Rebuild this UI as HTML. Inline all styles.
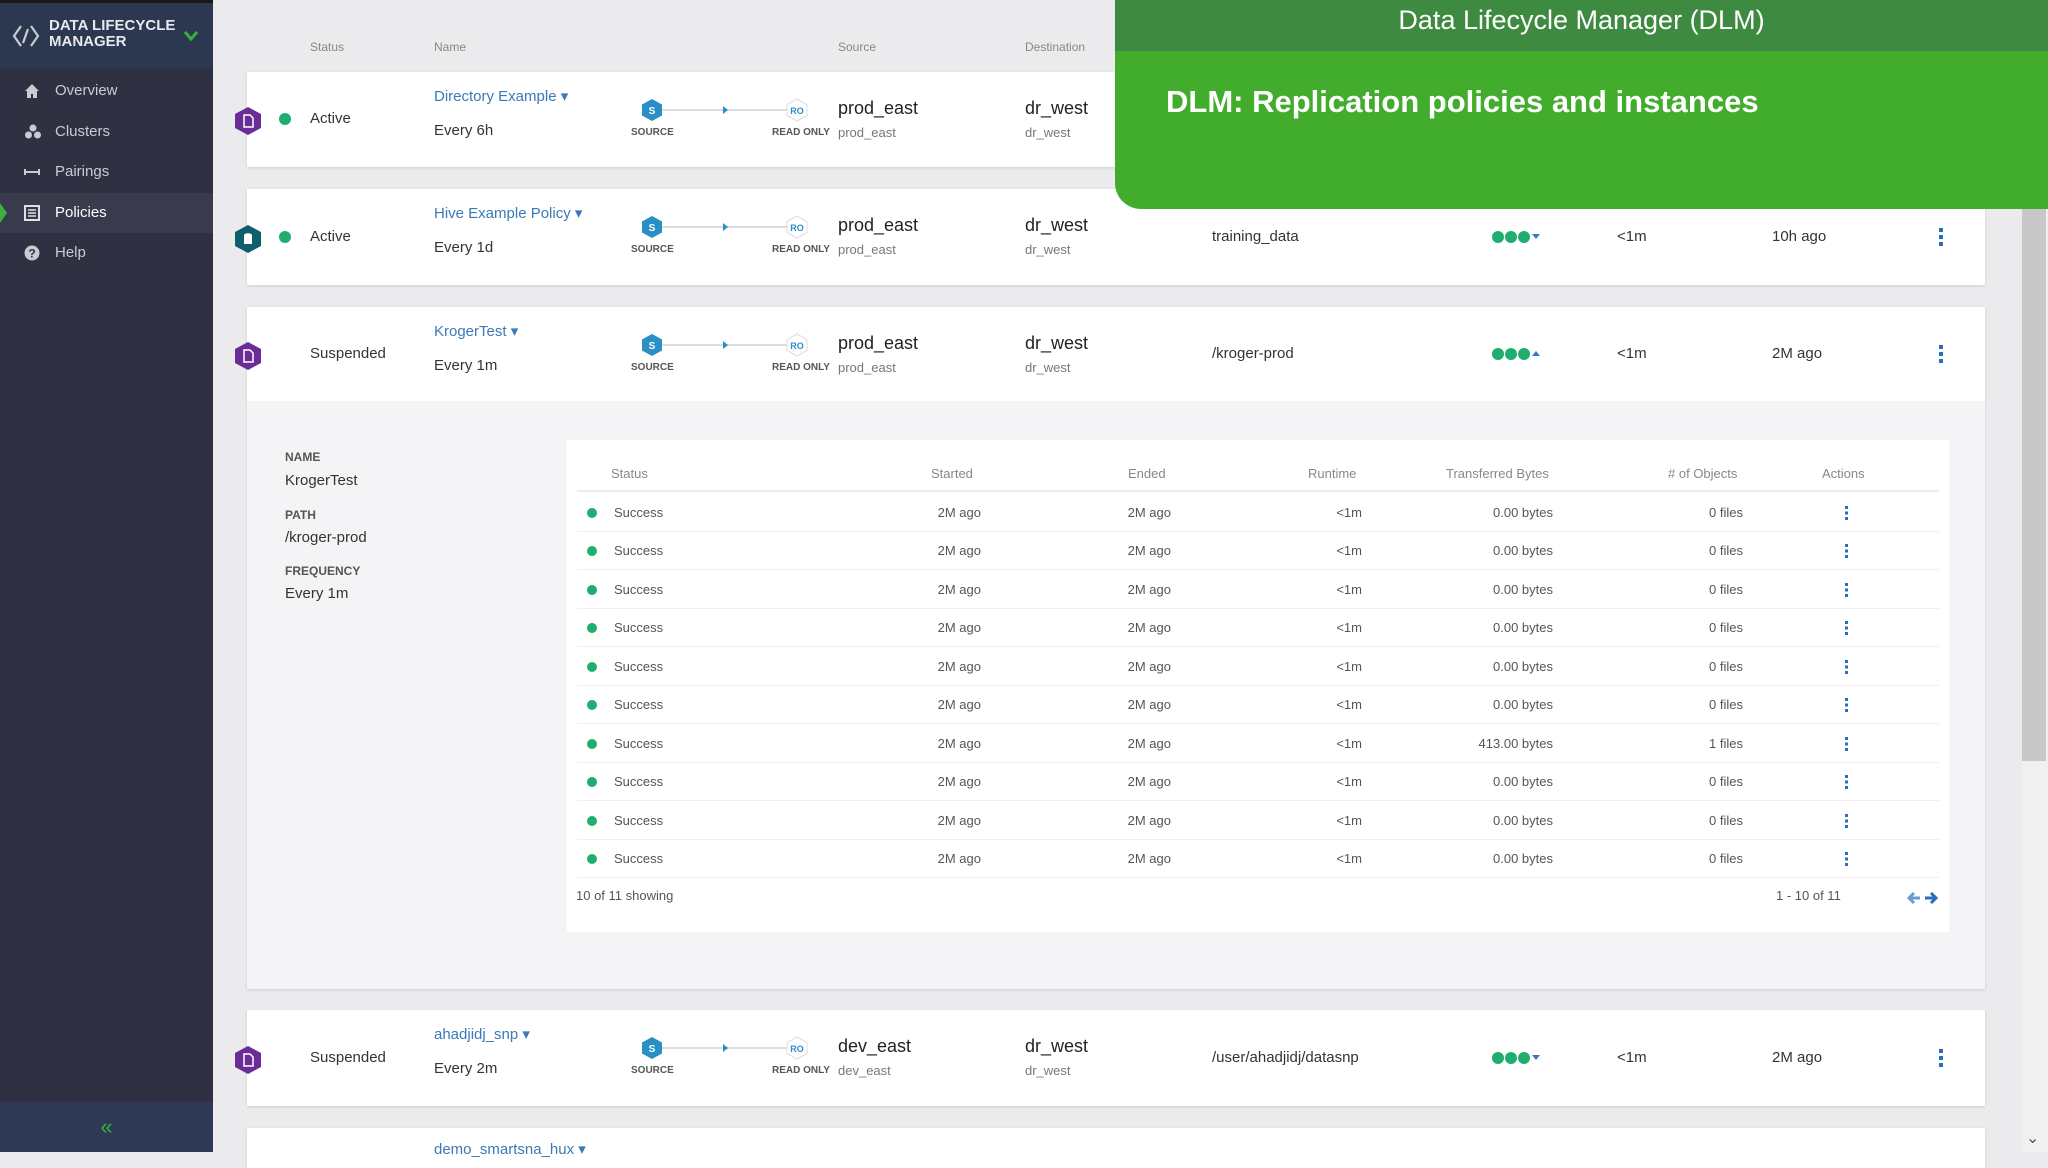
<!DOCTYPE html>
<html><head><meta charset="utf-8"><style>
*{margin:0;padding:0;box-sizing:border-box}
body{width:2048px;height:1152px;overflow:hidden;background:#ebebed;font-family:"Liberation Sans",sans-serif;position:relative;color:#333}
.a{position:absolute;white-space:nowrap}
#side{position:absolute;left:0;top:0;width:213px;height:1152px;background:#2f3142}
#sidehead{position:absolute;left:0;top:0;width:213px;height:68px;background:#2c3850;border-top:3px solid #1a1a1a}
.nav{position:absolute;left:0;width:213px;height:40px;color:#c9cbd3;font-size:15px;line-height:40px;padding-left:55px}
.nav svg{position:absolute;left:24px;top:12px}
#coll{position:absolute;left:0;top:1102px;width:213px;height:50px;background:#2e3a55;color:#3bb03b;font-size:22px;text-align:center;line-height:50px}
.card{position:absolute;left:247px;width:1738px;background:#fff;box-shadow:0 1px 3px rgba(0,0,0,.12)}
.card .a{line-height:24px;transform:translateY(-12px)}
.st{font-size:15px;color:#333}
.nm{font-size:15px;color:#3b79b8}
.fr{font-size:15px;color:#333}
.lbl{font-size:10px;font-weight:bold;color:#555}
.big{font-size:18px;color:#222}
.sub{font-size:13px;color:#777}
.hdr{font-size:12px;color:#888}
.tc{font-size:13px;color:#555}
.dot{width:12px;height:12px;border-radius:6px;background:#1fae6e}
</style></head><body>

<div class="a hdr" style="left:310px;top:40px">Status</div>
<div class="a hdr" style="left:434px;top:40px">Name</div>
<div class="a hdr" style="left:838px;top:40px">Source</div>
<div class="a hdr" style="left:1025px;top:40px">Destination</div>

<div id="side">
 <div id="sidehead">
  <svg class="a" style="left:12px;top:20px" width="28" height="26" viewBox="0 0 28 26"><path d="M9 3L2 13l7 10M19 3l7 10-7 10M16 6l-5 14" stroke="#c9cbd3" stroke-width="2.2" fill="none"/></svg>
  <div class="a" style="left:49px;top:15px;color:#e8e9ee;font-size:15px;font-weight:bold;line-height:16px">DATA LIFECYCLE<br>MANAGER</div>
  <svg class="a" style="left:184px;top:27px" width="14" height="11" viewBox="0 0 14 11"><path d="M1 2l6 7 6-7" stroke="#3bb03b" stroke-width="3" fill="none"/></svg>
 </div>
 <div class="nav" style="top:71px"><svg width="16" height="16" viewBox="0 0 16 16"><path d="M8 1L1 8h2v7h4v-4h2v4h4V8h2z" fill="#c9cbd3"/></svg>Overview</div>
 <div class="nav" style="top:112px"><svg width="18" height="16" viewBox="0 0 18 16"><circle cx="9" cy="4" r="3.5" fill="#c9cbd3"/><circle cx="4.5" cy="11" r="3.5" fill="#c9cbd3"/><circle cx="13.5" cy="11" r="3.5" fill="#c9cbd3"/></svg>Clusters</div>
 <div class="nav" style="top:152px"><svg width="16" height="16" viewBox="0 0 16 16"><path d="M1 8h14M1 5v6M15 5v6" stroke="#c9cbd3" stroke-width="2" fill="none"/></svg>Pairings</div>
 <div class="nav" style="top:193px;background:#393b4c;color:#fff"><svg width="16" height="16" viewBox="0 0 16 16"><rect x="1" y="1" width="14" height="14" fill="none" stroke="#e0e0e0" stroke-width="2"/><path d="M4 5h8M4 8h8M4 11h8" stroke="#e0e0e0" stroke-width="1.5"/></svg>Policies</div>
 <div class="a" style="left:0;top:203px;width:0;height:0;border-top:10px solid transparent;border-bottom:10px solid transparent;border-left:7px solid #3bb03b"></div>
 <div class="nav" style="top:233px"><svg width="16" height="16" viewBox="0 0 16 16"><circle cx="8" cy="8" r="7.5" fill="#c9cbd3"/><text x="8" y="12.5" font-size="12" font-weight="bold" text-anchor="middle" fill="#2f3142" font-family="Liberation Sans">?</text></svg>Help</div>
 <div id="coll">«</div>
</div>

<div class="card" style="top:72px;height:95px">
 <svg class="a" style="left:-12px;top:47px" width="26" height="28" viewBox="0 0 26 28"><path d="M13 0L26 7v14L13 28 0 21V7z" fill="#6a2d96"/><path d="M9 8h6l3 3v9H9z" fill="none" stroke="#fff" stroke-width="1.5"/></svg>
 <div class="a dot" style="left:32px;top:47px;transform:translateY(-6px)"></div>
 <div class="a st" style="left:63px;top:47px">Active</div>
 <div class="a nm" style="left:187px;top:25px">Directory Example ▾</div>
 <div class="a fr" style="left:187px;top:59px">Every 6h</div>
 <svg class="a" style="left:393px;top:38px" width="170" height="24" viewBox="0 0 170 24"><line x1="20" y1="12" x2="148" y2="12" stroke="#ddd" stroke-width="2"/><path d="M83 8l5 4-5 4z" fill="#2a8fc4"/><path d="M12 1l10 5.5v11L12 23 2 17.5v-11z" fill="#2a8fc4"/><text x="12" y="16" font-size="10" font-weight="bold" fill="#fff" text-anchor="middle" font-family="Liberation Sans">S</text><path d="M157 1l10 5.5v11L157 23l-10-5.5v-11z" fill="#fff" stroke="#ddd"/><text x="157" y="16" font-size="9" font-weight="bold" fill="#2a8fc4" text-anchor="middle" font-family="Liberation Sans">RO</text></svg>
 <div class="a lbl" style="left:384px;top:61px">SOURCE</div>
 <div class="a lbl" style="left:525px;top:61px">READ ONLY</div>
 <div class="a big" style="left:591px;top:36px">prod_east</div>
 <div class="a sub" style="left:591px;top:61px">prod_east</div>
 <div class="a big" style="left:778px;top:36px">dr_west</div>
 <div class="a sub" style="left:778px;top:61px">dr_west</div>
</div>

<div class="card" style="top:189px;height:96px">
 <svg class="a" style="left:-12px;top:48px" width="26" height="28" viewBox="0 0 26 28"><path d="M13 0L26 7v14L13 28 0 21V7z" fill="#0f5e6e"/><ellipse cx="13" cy="10" rx="4" ry="1.8" fill="#fff"/><rect x="9" y="10" width="8" height="9" fill="#fff"/></svg>
 <div class="a dot" style="left:32px;top:48px;transform:translateY(-6px)"></div>
 <div class="a st" style="left:63px;top:48px">Active</div>
 <div class="a nm" style="left:187px;top:25px">Hive Example Policy ▾</div>
 <div class="a fr" style="left:187px;top:59px">Every 1d</div>
 <svg class="a" style="left:393px;top:38px" width="170" height="24" viewBox="0 0 170 24"><line x1="20" y1="12" x2="148" y2="12" stroke="#ddd" stroke-width="2"/><path d="M83 8l5 4-5 4z" fill="#2a8fc4"/><path d="M12 1l10 5.5v11L12 23 2 17.5v-11z" fill="#2a8fc4"/><text x="12" y="16" font-size="10" font-weight="bold" fill="#fff" text-anchor="middle" font-family="Liberation Sans">S</text><path d="M157 1l10 5.5v11L157 23l-10-5.5v-11z" fill="#fff" stroke="#ddd"/><text x="157" y="16" font-size="9" font-weight="bold" fill="#2a8fc4" text-anchor="middle" font-family="Liberation Sans">RO</text></svg>
 <div class="a lbl" style="left:384px;top:61px">SOURCE</div>
 <div class="a lbl" style="left:525px;top:61px">READ ONLY</div>
 <div class="a big" style="left:591px;top:36px">prod_east</div>
 <div class="a sub" style="left:591px;top:61px">prod_east</div>
 <div class="a big" style="left:778px;top:36px">dr_west</div>
 <div class="a sub" style="left:778px;top:61px">dr_west</div>
 <div class="a st" style="left:965px;top:48px">training_data</div>
 <svg class="a" style="left:1244px;top:48px" width="52" height="24" viewBox="0 0 52 24"><circle cx="7" cy="12" r="6" fill="#1fae6e"/><circle cx="20" cy="12" r="6" fill="#1fae6e"/><circle cx="33" cy="12" r="6" fill="#1fae6e"/><path d="M41 9h8l-4 5z" fill="#3b79b8"/></svg>
 <div class="a st" style="left:1370px;top:48px">&lt;1m</div>
 <div class="a st" style="left:1525px;top:48px">10h ago</div>
 <svg class="a" style="left:1691px;top:48px" width="6" height="24" viewBox="0 0 6 24"><rect x="1" y="3" width="4" height="4" fill="#2a6fb8"/><rect x="1" y="10" width="4" height="4" fill="#2a6fb8"/><rect x="1" y="17" width="4" height="4" fill="#2a6fb8"/></svg>
</div>

<div class="card" style="top:307px;height:682px;background:#f4f4f6">
 <div class="a" style="left:0;top:12px;width:1738px;height:94px;background:#fff;transform:translateY(-12px)"></div>
 <svg class="a" style="left:-12px;top:47px" width="26" height="28" viewBox="0 0 26 28"><path d="M13 0L26 7v14L13 28 0 21V7z" fill="#6a2d96"/><path d="M9 8h6l3 3v9H9z" fill="none" stroke="#fff" stroke-width="1.5"/></svg>
 <div class="a st" style="left:63px;top:47px">Suspended</div>
 <div class="a nm" style="left:187px;top:25px">KrogerTest ▾</div>
 <div class="a fr" style="left:187px;top:59px">Every 1m</div>
 <svg class="a" style="left:393px;top:38px" width="170" height="24" viewBox="0 0 170 24"><line x1="20" y1="12" x2="148" y2="12" stroke="#ddd" stroke-width="2"/><path d="M83 8l5 4-5 4z" fill="#2a8fc4"/><path d="M12 1l10 5.5v11L12 23 2 17.5v-11z" fill="#2a8fc4"/><text x="12" y="16" font-size="10" font-weight="bold" fill="#fff" text-anchor="middle" font-family="Liberation Sans">S</text><path d="M157 1l10 5.5v11L157 23l-10-5.5v-11z" fill="#fff" stroke="#ddd"/><text x="157" y="16" font-size="9" font-weight="bold" fill="#2a8fc4" text-anchor="middle" font-family="Liberation Sans">RO</text></svg>
 <div class="a lbl" style="left:384px;top:61px">SOURCE</div>
 <div class="a lbl" style="left:525px;top:61px">READ ONLY</div>
 <div class="a big" style="left:591px;top:36px">prod_east</div>
 <div class="a sub" style="left:591px;top:61px">prod_east</div>
 <div class="a big" style="left:778px;top:36px">dr_west</div>
 <div class="a sub" style="left:778px;top:61px">dr_west</div>
 <div class="a st" style="left:965px;top:47px">/kroger-prod</div>
 <svg class="a" style="left:1244px;top:47px" width="52" height="24" viewBox="0 0 52 24"><circle cx="7" cy="12" r="6" fill="#1fae6e"/><circle cx="20" cy="12" r="6" fill="#1fae6e"/><circle cx="33" cy="12" r="6" fill="#1fae6e"/><path d="M41 14h8l-4-5z" fill="#3b79b8"/></svg>
 <div class="a st" style="left:1370px;top:47px">&lt;1m</div>
 <div class="a st" style="left:1525px;top:47px">2M ago</div>
 <svg class="a" style="left:1691px;top:47px" width="6" height="24" viewBox="0 0 6 24"><rect x="1" y="3" width="4" height="4" fill="#2a6fb8"/><rect x="1" y="10" width="4" height="4" fill="#2a6fb8"/><rect x="1" y="17" width="4" height="4" fill="#2a6fb8"/></svg>

 <div class="a lbl" style="left:38px;top:150px;font-size:12px">NAME</div>
 <div class="a st" style="left:38px;top:174px">KrogerTest</div>
 <div class="a lbl" style="left:38px;top:208px;font-size:12px">PATH</div>
 <div class="a st" style="left:38px;top:231px">/kroger-prod</div>
 <div class="a lbl" style="left:38px;top:264px;font-size:12px">FREQUENCY</div>
 <div class="a st" style="left:38px;top:287px">Every 1m</div>
</div>

<div class="a" style="left:567px;top:440px;width:1382px;height:492px;background:#fff">
 <div style="position:absolute;left:10px;top:50px;width:1362px;border-top:2px solid #ececec"></div>
</div>
<div class="a hdr" style="left:611px;top:466px;font-size:13px">Status</div>
<div class="a hdr" style="left:931px;top:466px;font-size:13px">Started</div>
<div class="a hdr" style="left:1128px;top:466px;font-size:13px">Ended</div>
<div class="a hdr" style="left:1308px;top:466px;font-size:13px">Runtime</div>
<div class="a hdr" style="left:1446px;top:466px;font-size:13px">Transferred Bytes</div>
<div class="a hdr" style="left:1668px;top:466px;font-size:13px"># of Objects</div>
<div class="a hdr" style="left:1822px;top:466px;font-size:13px">Actions</div>

<div id="rows">
<div class="a" style="left:577px;top:494px;width:1362px;height:38px;border-bottom:1px solid #f0f0f0"><div class="a dot" style="left:10px;top:14px;width:10px;height:10px"></div><span class="a tc" style="left:37px;top:11px">Success</span><span class="a tc" style="right:958px;top:11px">2M ago</span><span class="a tc" style="right:768px;top:11px">2M ago</span><span class="a tc" style="right:577px;top:11px">&lt;1m</span><span class="a tc" style="right:386px;top:11px">0.00 bytes</span><span class="a tc" style="right:196px;top:11px">0 files</span><svg class="a" style="left:1268px;top:12px" width="4" height="14"><rect y="0" width="3" height="3" fill="#2a6fb8"/><rect y="5.5" width="3" height="3" fill="#2a6fb8"/><rect y="11" width="3" height="3" fill="#2a6fb8"/></svg></div>
<div class="a" style="left:577px;top:532px;width:1362px;height:38px;border-bottom:1px solid #f0f0f0"><div class="a dot" style="left:10px;top:14px;width:10px;height:10px"></div><span class="a tc" style="left:37px;top:11px">Success</span><span class="a tc" style="right:958px;top:11px">2M ago</span><span class="a tc" style="right:768px;top:11px">2M ago</span><span class="a tc" style="right:577px;top:11px">&lt;1m</span><span class="a tc" style="right:386px;top:11px">0.00 bytes</span><span class="a tc" style="right:196px;top:11px">0 files</span><svg class="a" style="left:1268px;top:12px" width="4" height="14"><rect y="0" width="3" height="3" fill="#2a6fb8"/><rect y="5.5" width="3" height="3" fill="#2a6fb8"/><rect y="11" width="3" height="3" fill="#2a6fb8"/></svg></div>
<div class="a" style="left:577px;top:571px;width:1362px;height:38px;border-bottom:1px solid #f0f0f0"><div class="a dot" style="left:10px;top:14px;width:10px;height:10px"></div><span class="a tc" style="left:37px;top:11px">Success</span><span class="a tc" style="right:958px;top:11px">2M ago</span><span class="a tc" style="right:768px;top:11px">2M ago</span><span class="a tc" style="right:577px;top:11px">&lt;1m</span><span class="a tc" style="right:386px;top:11px">0.00 bytes</span><span class="a tc" style="right:196px;top:11px">0 files</span><svg class="a" style="left:1268px;top:12px" width="4" height="14"><rect y="0" width="3" height="3" fill="#2a6fb8"/><rect y="5.5" width="3" height="3" fill="#2a6fb8"/><rect y="11" width="3" height="3" fill="#2a6fb8"/></svg></div>
<div class="a" style="left:577px;top:609px;width:1362px;height:38px;border-bottom:1px solid #f0f0f0"><div class="a dot" style="left:10px;top:14px;width:10px;height:10px"></div><span class="a tc" style="left:37px;top:11px">Success</span><span class="a tc" style="right:958px;top:11px">2M ago</span><span class="a tc" style="right:768px;top:11px">2M ago</span><span class="a tc" style="right:577px;top:11px">&lt;1m</span><span class="a tc" style="right:386px;top:11px">0.00 bytes</span><span class="a tc" style="right:196px;top:11px">0 files</span><svg class="a" style="left:1268px;top:12px" width="4" height="14"><rect y="0" width="3" height="3" fill="#2a6fb8"/><rect y="5.5" width="3" height="3" fill="#2a6fb8"/><rect y="11" width="3" height="3" fill="#2a6fb8"/></svg></div>
<div class="a" style="left:577px;top:648px;width:1362px;height:38px;border-bottom:1px solid #f0f0f0"><div class="a dot" style="left:10px;top:14px;width:10px;height:10px"></div><span class="a tc" style="left:37px;top:11px">Success</span><span class="a tc" style="right:958px;top:11px">2M ago</span><span class="a tc" style="right:768px;top:11px">2M ago</span><span class="a tc" style="right:577px;top:11px">&lt;1m</span><span class="a tc" style="right:386px;top:11px">0.00 bytes</span><span class="a tc" style="right:196px;top:11px">0 files</span><svg class="a" style="left:1268px;top:12px" width="4" height="14"><rect y="0" width="3" height="3" fill="#2a6fb8"/><rect y="5.5" width="3" height="3" fill="#2a6fb8"/><rect y="11" width="3" height="3" fill="#2a6fb8"/></svg></div>
<div class="a" style="left:577px;top:686px;width:1362px;height:38px;border-bottom:1px solid #f0f0f0"><div class="a dot" style="left:10px;top:14px;width:10px;height:10px"></div><span class="a tc" style="left:37px;top:11px">Success</span><span class="a tc" style="right:958px;top:11px">2M ago</span><span class="a tc" style="right:768px;top:11px">2M ago</span><span class="a tc" style="right:577px;top:11px">&lt;1m</span><span class="a tc" style="right:386px;top:11px">0.00 bytes</span><span class="a tc" style="right:196px;top:11px">0 files</span><svg class="a" style="left:1268px;top:12px" width="4" height="14"><rect y="0" width="3" height="3" fill="#2a6fb8"/><rect y="5.5" width="3" height="3" fill="#2a6fb8"/><rect y="11" width="3" height="3" fill="#2a6fb8"/></svg></div>
<div class="a" style="left:577px;top:725px;width:1362px;height:38px;border-bottom:1px solid #f0f0f0"><div class="a dot" style="left:10px;top:14px;width:10px;height:10px"></div><span class="a tc" style="left:37px;top:11px">Success</span><span class="a tc" style="right:958px;top:11px">2M ago</span><span class="a tc" style="right:768px;top:11px">2M ago</span><span class="a tc" style="right:577px;top:11px">&lt;1m</span><span class="a tc" style="right:386px;top:11px">413.00 bytes</span><span class="a tc" style="right:196px;top:11px">1 files</span><svg class="a" style="left:1268px;top:12px" width="4" height="14"><rect y="0" width="3" height="3" fill="#2a6fb8"/><rect y="5.5" width="3" height="3" fill="#2a6fb8"/><rect y="11" width="3" height="3" fill="#2a6fb8"/></svg></div>
<div class="a" style="left:577px;top:763px;width:1362px;height:38px;border-bottom:1px solid #f0f0f0"><div class="a dot" style="left:10px;top:14px;width:10px;height:10px"></div><span class="a tc" style="left:37px;top:11px">Success</span><span class="a tc" style="right:958px;top:11px">2M ago</span><span class="a tc" style="right:768px;top:11px">2M ago</span><span class="a tc" style="right:577px;top:11px">&lt;1m</span><span class="a tc" style="right:386px;top:11px">0.00 bytes</span><span class="a tc" style="right:196px;top:11px">0 files</span><svg class="a" style="left:1268px;top:12px" width="4" height="14"><rect y="0" width="3" height="3" fill="#2a6fb8"/><rect y="5.5" width="3" height="3" fill="#2a6fb8"/><rect y="11" width="3" height="3" fill="#2a6fb8"/></svg></div>
<div class="a" style="left:577px;top:802px;width:1362px;height:38px;border-bottom:1px solid #f0f0f0"><div class="a dot" style="left:10px;top:14px;width:10px;height:10px"></div><span class="a tc" style="left:37px;top:11px">Success</span><span class="a tc" style="right:958px;top:11px">2M ago</span><span class="a tc" style="right:768px;top:11px">2M ago</span><span class="a tc" style="right:577px;top:11px">&lt;1m</span><span class="a tc" style="right:386px;top:11px">0.00 bytes</span><span class="a tc" style="right:196px;top:11px">0 files</span><svg class="a" style="left:1268px;top:12px" width="4" height="14"><rect y="0" width="3" height="3" fill="#2a6fb8"/><rect y="5.5" width="3" height="3" fill="#2a6fb8"/><rect y="11" width="3" height="3" fill="#2a6fb8"/></svg></div>
<div class="a" style="left:577px;top:840px;width:1362px;height:38px;border-bottom:1px solid #f0f0f0"><div class="a dot" style="left:10px;top:14px;width:10px;height:10px"></div><span class="a tc" style="left:37px;top:11px">Success</span><span class="a tc" style="right:958px;top:11px">2M ago</span><span class="a tc" style="right:768px;top:11px">2M ago</span><span class="a tc" style="right:577px;top:11px">&lt;1m</span><span class="a tc" style="right:386px;top:11px">0.00 bytes</span><span class="a tc" style="right:196px;top:11px">0 files</span><svg class="a" style="left:1268px;top:12px" width="4" height="14"><rect y="0" width="3" height="3" fill="#2a6fb8"/><rect y="5.5" width="3" height="3" fill="#2a6fb8"/><rect y="11" width="3" height="3" fill="#2a6fb8"/></svg></div>
</div>
<div class="a tc" style="left:576px;top:888px">10 of 11 showing</div>
<div class="a tc" style="left:1776px;top:888px">1 - 10 of 11</div>
<svg class="a" style="left:1906px;top:890px" width="34" height="16" viewBox="0 0 34 16"><path d="M14 8H3M8 3L3 8l5 5" stroke="#6b9bd0" stroke-width="3" fill="none"/><path d="M19 8h11M25 3l5 5-5 5" stroke="#2a6fb8" stroke-width="3" fill="none"/></svg>

<div class="card" style="top:1010px;height:96px">
 <svg class="a" style="left:-12px;top:48px" width="26" height="28" viewBox="0 0 26 28"><path d="M13 0L26 7v14L13 28 0 21V7z" fill="#6a2d96"/><path d="M9 8h6l3 3v9H9z" fill="none" stroke="#fff" stroke-width="1.5"/></svg>
 <div class="a st" style="left:63px;top:48px">Suspended</div>
 <div class="a nm" style="left:187px;top:25px">ahadjidj_snp ▾</div>
 <div class="a fr" style="left:187px;top:59px">Every 2m</div>
 <svg class="a" style="left:393px;top:38px" width="170" height="24" viewBox="0 0 170 24"><line x1="20" y1="12" x2="148" y2="12" stroke="#ddd" stroke-width="2"/><path d="M83 8l5 4-5 4z" fill="#2a8fc4"/><path d="M12 1l10 5.5v11L12 23 2 17.5v-11z" fill="#2a8fc4"/><text x="12" y="16" font-size="10" font-weight="bold" fill="#fff" text-anchor="middle" font-family="Liberation Sans">S</text><path d="M157 1l10 5.5v11L157 23l-10-5.5v-11z" fill="#fff" stroke="#ddd"/><text x="157" y="16" font-size="9" font-weight="bold" fill="#2a8fc4" text-anchor="middle" font-family="Liberation Sans">RO</text></svg>
 <div class="a lbl" style="left:384px;top:61px">SOURCE</div>
 <div class="a lbl" style="left:525px;top:61px">READ ONLY</div>
 <div class="a big" style="left:591px;top:36px">dev_east</div>
 <div class="a sub" style="left:591px;top:61px">dev_east</div>
 <div class="a big" style="left:778px;top:36px">dr_west</div>
 <div class="a sub" style="left:778px;top:61px">dr_west</div>
 <div class="a st" style="left:965px;top:48px">/user/ahadjidj/datasnp</div>
 <svg class="a" style="left:1244px;top:48px" width="52" height="24" viewBox="0 0 52 24"><circle cx="7" cy="12" r="6" fill="#1fae6e"/><circle cx="20" cy="12" r="6" fill="#1fae6e"/><circle cx="33" cy="12" r="6" fill="#1fae6e"/><path d="M41 9h8l-4 5z" fill="#3b79b8"/></svg>
 <div class="a st" style="left:1370px;top:48px">&lt;1m</div>
 <div class="a st" style="left:1525px;top:48px">2M ago</div>
 <svg class="a" style="left:1691px;top:48px" width="6" height="24" viewBox="0 0 6 24"><rect x="1" y="3" width="4" height="4" fill="#2a6fb8"/><rect x="1" y="10" width="4" height="4" fill="#2a6fb8"/><rect x="1" y="17" width="4" height="4" fill="#2a6fb8"/></svg>
</div>
<div class="card" style="top:1128px;height:40px">
 <div class="a nm" style="left:187px;top:22px">demo_smartsna_hux ▾</div>
</div>

<div class="a" style="left:2022px;top:0;width:26px;height:1152px;background:#f0f0f0"></div>
<div class="a" style="left:2022px;top:0;width:24px;height:761px;background:#c8c8c8"></div>
<div class="a" style="left:2026px;top:1128px;color:#555;font-size:16px">⌄</div>

<div class="a" style="left:1115px;top:0;width:933px;height:209px;background:#42ad2c;border-bottom-left-radius:26px;overflow:hidden">
 <div style="height:51px;background:#3e8a41;color:#fff;font-size:27px;text-align:center;line-height:40px">Data Lifecycle Manager (DLM)</div>
 <div class="a" style="left:51px;top:84px;color:#fff;font-size:31px;font-weight:bold">DLM: Replication policies and instances</div>
</div>
</body></html>
